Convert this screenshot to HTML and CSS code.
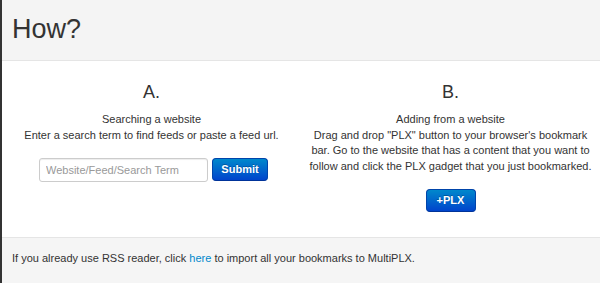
FILE: index.html
```html
<!DOCTYPE html>
<html lang="en">
<head>
    <meta charset="UTF-8" />
    <title>How?</title>
    <link rel="stylesheet" href="styles.css">
</head>
<body>
<div class="dialog">
    <header class="dialog-header">How?</header>

    <div class="dialog-body">
        <div class="step">
            <h3>A.</h3>
            <p>Searching a website<br>Enter a search term to find feeds or paste a feed url.</p>
            <form class="search-form">
                <input type="text" placeholder="Website/Feed/Search Term">
                <button type="submit" class="btn">Submit</button>
            </form>
        </div>
        <div class="step">
            <h3>B.</h3>
            <p>Adding from a website<br>Drag and drop "PLX" button to your browser's bookmark bar. Go to the website that has a content that you want to follow and click the PLX gadget that you just bookmarked.</p>
            <a class="btn" href="#">+PLX</a>
        </div>
    </div>

    <footer class="dialog-footer">
        If you already use RSS reader, click <a href="#">here</a> to import all your bookmarks to MultiPLX.
    </footer>
</div>
</body>
</html>
```

FILE: styles.css
```css
body {
    margin: 0;
    font-family: 'Liberation Sans', Arial, sans-serif;
    font-size: 11px;
    color: #333;
    background-color: #fff;
}

.dialog {
    border-left: 2px solid #333;
    min-height: 283px;
    background-color: #f5f5f5;
}

.dialog-header {
    background-color: #f4f4f4;
    border-bottom: 1px solid #e5e5e5;
    padding: 9px 10px 11px;
    font-size: 27px;
    line-height: 40px;
}

.dialog-body {
    background-color: white;
    display: grid;
    grid-template-columns: 1fr 1fr;
    padding: 19px 0 25px;
}

.step {
    text-align: center;
    padding: 0 5px;
}

.step h3 {
    margin: 0 0 8px;
    font-size: 18px;
    line-height: 24px;
    font-weight: normal;
}

.step p {
    margin: 0 0 15px;
    line-height: 15.5px;
}

.search-form {
    display: flex;
    justify-content: center;
    gap: 4px;
    margin: 0;
    padding-left: 4px;
}

.search-form input {
    width: 169px;
    height: 24px;
    box-sizing: border-box;
    padding: 0 6px;
    border: 1px solid #ccc;
    border-radius: 3px;
    box-shadow: inset 0 1px 1px rgba(0,0,0,0.075);
    font-family: inherit;
    font-size: 11px;
    color: #555;
}

.search-form input::placeholder {
    color: #999;
}

.btn {
    display: inline-block;
    box-sizing: border-box;
    height: 23px;
    padding: 0 11px;
    line-height: 21px;
    font-family: inherit;
    font-size: 11px;
    font-weight: bold;
    color: white;
    text-decoration: none;
    background-color: #0055cc;
    background-image: linear-gradient(to bottom, #0088cc, #0044cc);
    border: 1px solid #0044aa;
    border-bottom-color: #003399;
    border-radius: 4px;
    text-shadow: 0 -1px 0 rgba(0,0,0,0.25);
    cursor: pointer;
}

.search-form .btn {
    width: 56px;
    padding: 0;
}

.step > .btn {
    width: 50px;
    padding: 0;
}

.dialog-footer {
    border-top: 1px solid #e5e5e5;
    padding: 12px 10px 20px;
    line-height: 16px;
}

.dialog-footer a {
    color: #0088cc;
    text-decoration: none;
}
```
